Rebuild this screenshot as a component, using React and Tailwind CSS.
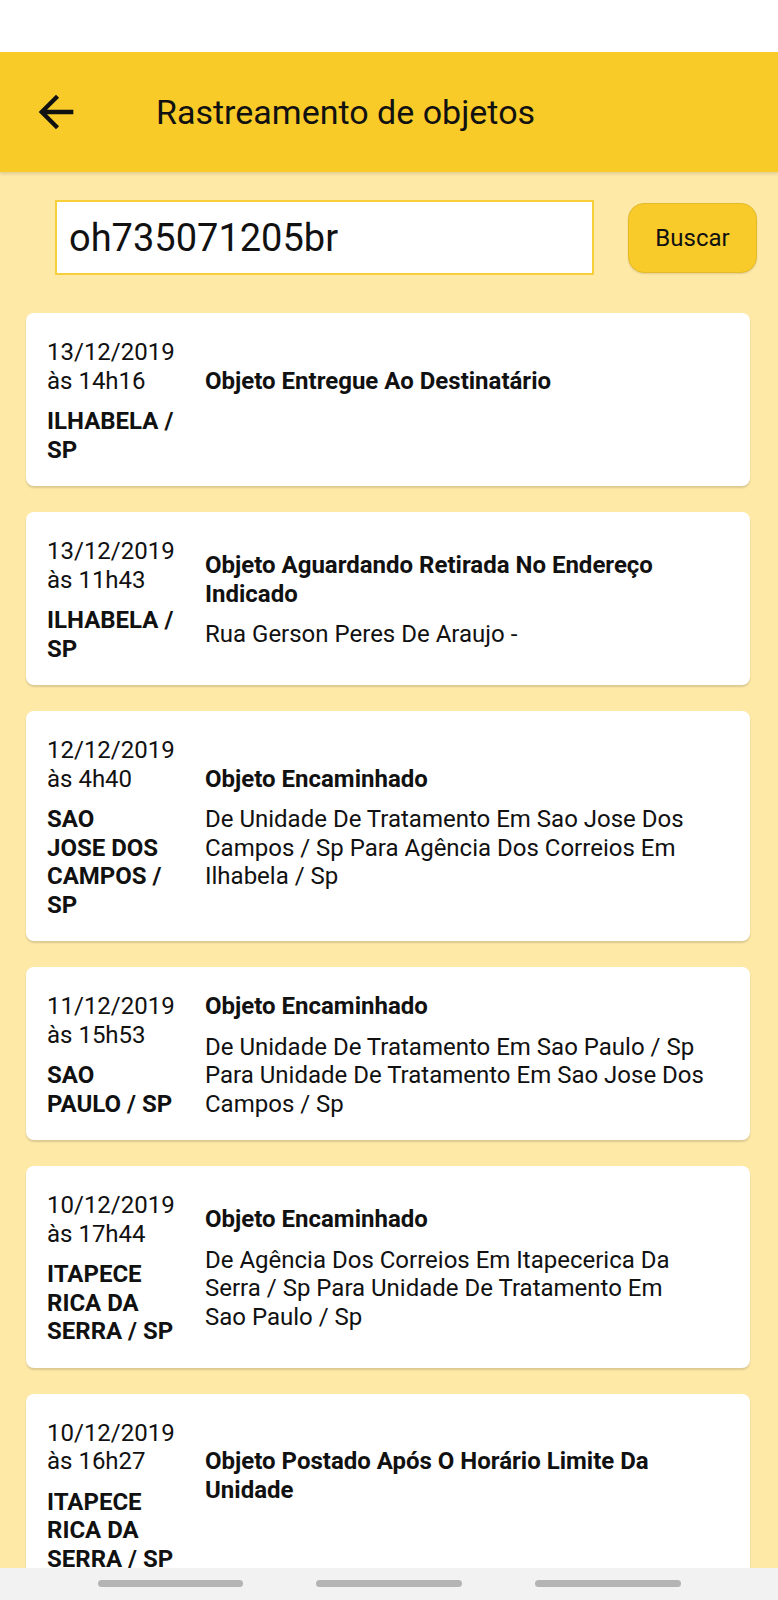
import React from "react";

const eventos = [
  {
    data: "13/12/2019",
    hora: "às 14h16",
    local: "ILHABELA /\nSP",
    titulo: "Objeto Entregue Ao Destinatário",
    detalhe: "",
  },
  {
    data: "13/12/2019",
    hora: "às 11h43",
    local: "ILHABELA /\nSP",
    titulo: "Objeto Aguardando Retirada No Endereço\nIndicado",
    detalhe: "Rua Gerson Peres De Araujo -",
  },
  {
    data: "12/12/2019",
    hora: "às 4h40",
    local: "SAO\nJOSE DOS\nCAMPOS /\nSP",
    titulo: "Objeto Encaminhado",
    detalhe:
      "De Unidade De Tratamento Em Sao Jose Dos\nCampos / Sp Para Agência Dos Correios Em\nIlhabela / Sp",
  },
  {
    data: "11/12/2019",
    hora: "às 15h53",
    local: "SAO\nPAULO / SP",
    titulo: "Objeto Encaminhado",
    detalhe:
      "De Unidade De Tratamento Em Sao Paulo / Sp\nPara Unidade De Tratamento Em Sao Jose Dos\nCampos / Sp",
  },
  {
    data: "10/12/2019",
    hora: "às 17h44",
    local: "ITAPECE\nRICA DA\nSERRA / SP",
    titulo: "Objeto Encaminhado",
    detalhe:
      "De Agência Dos Correios Em Itapecerica Da\nSerra / Sp Para Unidade De Tratamento Em\nSao Paulo / Sp",
  },
  {
    data: "10/12/2019",
    hora: "às 16h27",
    local: "ITAPECE\nRICA DA\nSERRA / SP",
    titulo: "Objeto Postado Após O Horário Limite Da\nUnidade",
    detalhe: "",
  },
];

function EventoCard({ ev }) {
  return (
    <div className="flex items-center rounded-lg bg-white pl-[21px] pr-[21px] pt-[25px] pb-[22px] shadow-[0_2px_2px_rgba(0,0,0,0.14)]">
      <div className="w-[140px] shrink-0">
        <div className="leading-[28.5px]">
          <div>{ev.data}</div>
          <div>{ev.hora}</div>
        </div>
        <div className="mt-[12px] whitespace-pre-line font-bold leading-[28.5px]">
          {ev.local}
        </div>
      </div>
      <div className="ml-[18px] flex-1">
        <div className="whitespace-pre-line font-bold leading-[28.5px]">{ev.titulo}</div>
        {/* endereço vazio ainda ocupa uma linha */}
        <div className="mt-[12px] min-h-[28.5px] whitespace-pre-line leading-[28.5px]">
          {ev.detalhe}
        </div>
      </div>
    </div>
  );
}

export default function App() {
  return (
    <div className="min-h-[1600px] bg-[#fee9a7] font-['Roboto',sans-serif] text-[24px] text-[#111]">
      <div className="h-[52px] bg-white" />

      <header className="relative z-10 flex h-[120px] items-center bg-[#f9cb28] shadow-[0_2px_3px_rgba(0,0,0,0.12)]">
        <svg className="ml-[30px] h-[52px] w-[52px]" viewBox="0 0 24 24" fill="#111">
          <path d="M20 11H7.83l5.59-5.59L12 4l-8 8 8 8 1.41-1.41L7.83 13H20v-2z" />
        </svg>
        <h1 className="ml-[74px] text-[34px] leading-none">Rastreamento de objetos</h1>
      </header>

      <div className="flex items-center pl-[55px] pr-[21px] pt-[28px]">
        <div className="flex h-[75px] w-[539px] items-center border-2 border-[#f6cf3a] bg-white pl-[12px] text-[38px] leading-none">
          oh735071205br
        </div>
        <button className="ml-auto h-[70px] w-[129px] rounded-[16px] border border-[#e4bb27] bg-[#f9cb2a] text-[24px] shadow-[0_1px_2px_rgba(0,0,0,0.12)]">
          Buscar
        </button>
      </div>

      <div className="flex flex-col gap-[26px] pl-[26px] pr-[28px] pt-[38px] pb-[60px]">
        {eventos.map((ev, i) => (
          <EventoCard key={i} ev={ev} />
        ))}
      </div>

      <div className="fixed bottom-0 left-0 right-0 flex h-[32px] items-start justify-center gap-[73px] bg-[#f2f2f2] pt-[12px]">
        <div className="h-[7px] w-[145px] rounded-full bg-[#b4b4b4]" />
        <div className="h-[7px] w-[146px] rounded-full bg-[#b4b4b4]" />
        <div className="h-[7px] w-[146px] rounded-full bg-[#b4b4b4]" />
      </div>
    </div>
  );
}
